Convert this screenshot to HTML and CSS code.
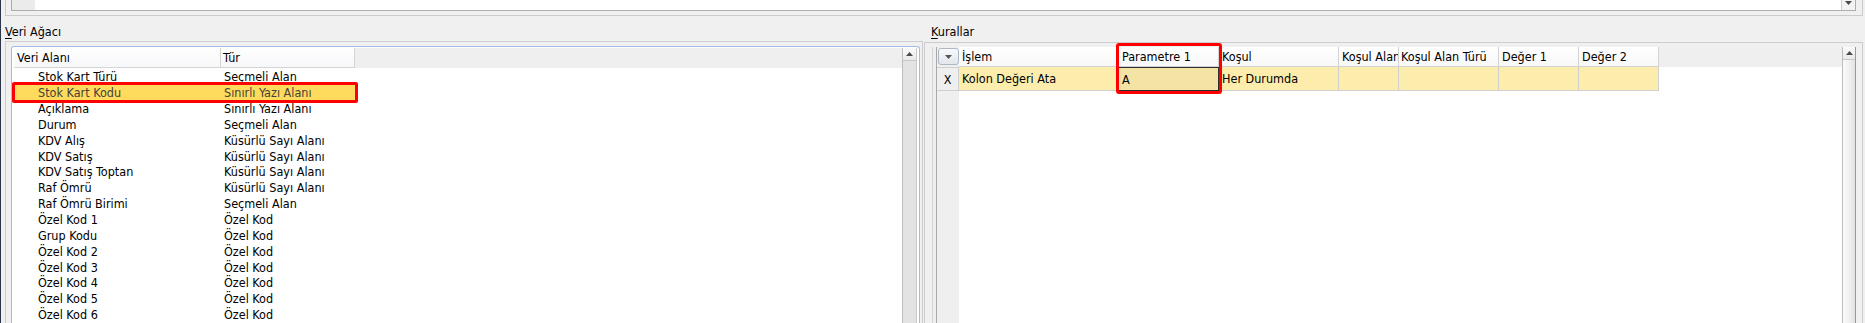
FILE: index.html
```html
<!DOCTYPE html>
<html lang="tr">
<head>
<meta charset="utf-8">
<title>Kurallar</title>
<link rel="stylesheet" href="styles.css">
</head>
<body>
<div class="app">
  <div class="top">
    <div class="combo">
      <div class="combo-left"></div>
      <div class="combo-field"></div>
      <div class="combo-btn"><svg width="7" height="4" viewBox="0 0 7 4"><path d="M0 0h7L3.5 4z" fill="#4a4a4a"/></svg></div>
    </div>
  </div>
  <div class="main">
    <section class="lg">
      <div class="caption"><span class="mn">V</span>eri Ağacı</div>
      <div class="lframe">
        <div class="listbox">
          <div class="list">
            <div class="list-head">
              <div class="hcell c1">Veri Alanı</div>
              <div class="hcell c2">Tür</div>
            </div>
            <div class="row"><div class="c1">Stok Kart Türü</div><div class="c2">Seçmeli Alan</div></div>
            <div class="row sel"><div class="c1">Stok Kart Kodu</div><div class="c2">Sınırlı Yazı Alanı</div></div>
            <div class="row"><div class="c1">Açıklama</div><div class="c2">Sınırlı Yazı Alanı</div></div>
            <div class="row"><div class="c1">Durum</div><div class="c2">Seçmeli Alan</div></div>
            <div class="row"><div class="c1">KDV Alış</div><div class="c2">Küsürlü Sayı Alanı</div></div>
            <div class="row"><div class="c1">KDV Satış</div><div class="c2">Küsürlü Sayı Alanı</div></div>
            <div class="row"><div class="c1">KDV Satış Toptan</div><div class="c2">Küsürlü Sayı Alanı</div></div>
            <div class="row"><div class="c1">Raf Ömrü</div><div class="c2">Küsürlü Sayı Alanı</div></div>
            <div class="row"><div class="c1">Raf Ömrü Birimi</div><div class="c2">Seçmeli Alan</div></div>
            <div class="row"><div class="c1">Özel Kod 1</div><div class="c2">Özel Kod</div></div>
            <div class="row"><div class="c1">Grup Kodu</div><div class="c2">Özel Kod</div></div>
            <div class="row"><div class="c1">Özel Kod 2</div><div class="c2">Özel Kod</div></div>
            <div class="row"><div class="c1">Özel Kod 3</div><div class="c2">Özel Kod</div></div>
            <div class="row"><div class="c1">Özel Kod 4</div><div class="c2">Özel Kod</div></div>
            <div class="row"><div class="c1">Özel Kod 5</div><div class="c2">Özel Kod</div></div>
            <div class="row"><div class="c1">Özel Kod 6</div><div class="c2">Özel Kod</div></div>
          </div>
          <div class="vscroll">
            <div class="sbtn"><svg width="7" height="4" viewBox="0 0 7 4"><path d="M0 4h7L3.5 0z" fill="#4a4a4a"/></svg></div>
            <div class="track"></div>
          </div>
        </div>
      </div>
    </section>
    <section class="rg">
      <div class="caption cap-r"><span class="mn">K</span>urallar</div>
      <div class="rframe">
        <div class="grid">
          <div class="gcol ind">
            <div class="gh"><div class="hbtn"><svg width="7" height="4" viewBox="0 0 7 4"><path d="M0 0h7L3.5 4z" fill="#555"/></svg></div></div>
            <div class="gd">X</div>
          </div>
          <div class="gcol w-islem"><div class="gh">İşlem</div><div class="gd">Kolon Değeri Ata</div></div>
          <div class="gcol w-param"><div class="mark"><div class="gh">Parametre 1</div><div class="gd cur">A</div></div></div>
          <div class="gcol w-kosul"><div class="gh">Koşul</div><div class="gd">Her Durumda</div></div>
          <div class="gcol w-kalan"><div class="gh">Koşul Alanı</div><div class="gd"></div></div>
          <div class="gcol w-ktur"><div class="gh">Koşul Alan Türü</div><div class="gd"></div></div>
          <div class="gcol w-deger"><div class="gh">Değer 1</div><div class="gd"></div></div>
          <div class="gcol w-deger"><div class="gh">Değer 2</div><div class="gd"></div></div>
          <div class="gfill"></div>
          <div class="rscroll">
            <div class="sbtn"><svg width="7" height="4" viewBox="0 0 7 4"><path d="M0 4h7L3.5 0z" fill="#4a4a4a"/></svg></div>
            <div class="rtrack"></div>
          </div>
        </div>
      </div>
    </section>
  </div>
</div>
</body>
</html>
```

FILE: styles.css
```css
* { box-sizing: border-box; }

body {
  margin: 0;
  width: 1865px;
  height: 323px;
  overflow: hidden;
  background: #f0f0f0;
  font-family: "DejaVu Sans Condensed", "DejaVu Sans", sans-serif;
  font-stretch: condensed;
  font-size: 12.5px;
  color: #000;
}

.app {
  display: flex;
  flex-direction: column;
  height: 323px;
  border-left: 1px solid #2b3548;
}

/* top combo */
.top {
  height: 16px;
  margin: 0 2px 0 4px;
  border: 1px solid #cbcbcb;
  border-top: none;
  padding: 0 6px 0 5px;
}
.combo {
  display: flex;
  height: 11px;
  border: 1px solid #adadad;
  border-top: none;
  background: #fff;
}
.combo-left { width: 23px; background: #ebebeb; }
.combo-field { flex: 1; }
.combo-btn {
  width: 14px;
  border-left: 1px solid #cfcfcf;
  background: #f3f3f3;
  display: flex;
  justify-content: center;
  align-items: center;
  padding-bottom: 4px;
}

.main { flex: 1; display: flex; min-height: 0; }

.caption {
  height: 26px;
  padding-top: 9px;
  line-height: 14px;
  white-space: nowrap;
}
.cap-r { padding-left: 7px; }
.mn { text-decoration: underline; text-underline-offset: 2px; }

/* left group */
.lg {
  width: 918px;
  margin-left: 4px;
  display: flex;
  flex-direction: column;
}
.lframe {
  flex: 1;
  border: 1px solid #cdcdcd;
  border-bottom: none;
  padding: 4px 2px 0 5px;
}
.listbox {
  height: 100%;
  display: flex;
  border: 1px solid #9dbde6;
  border-bottom: none;
  border-radius: 3px 3px 0 0;
  background: #fff;
  padding: 1px 1px 0 2px;
}
.list { flex: 1; }
.list-head {
  display: flex;
  height: 20px;
  background: #efefef;
  margin-bottom: 1px;
}
.hcell {
  background: linear-gradient(#ffffff, #f6f7f9);
  border-right: 1px solid #d5d5d5;
  border-bottom: 1px solid #d5d5d5;
  line-height: 19px;
  padding-left: 3px;
  white-space: nowrap;
}
.list-head .c1 { width: 207px; }
.list-head .c2 { width: 134px; padding-left: 2px; }

.row {
  display: flex;
  width: 341px;
  height: 15.87px;
  line-height: 15.87px;
  white-space: nowrap;
}
.row .c1 { width: 207px; padding-left: 24px; }
.row .c2 { width: 134px; padding-left: 3px; }
.row.sel {
  position: relative;
  background: #fedb5c;
  color: #45403a;
}
.row.sel::after {
  content: "";
  position: absolute;
  top: -3px;
  bottom: -2px;
  left: -2px;
  right: -3px;
  border: 3px solid #ff0000;
  border-radius: 2px;
}

.vscroll {
  width: 15px;
  margin-right: 1px;
  border-left: 1px solid #bdbdbd;
  border-right: 1px solid #c8c8c8;
  display: flex;
  flex-direction: column;
}
.sbtn {
  height: 13px;
  flex: none;
  background: linear-gradient(#fbfbfb, #e9e9e9);
  border-bottom: 1px solid #c6c6c6;
  display: flex;
  justify-content: center;
  align-items: center;
}
.track { flex: 1; background: #e3e3e3; }

/* right group */
.rg {
  flex: 1;
  margin: 0 2px 0 1px;
  display: flex;
  flex-direction: column;
}
.rframe {
  flex: 1;
  display: flex;
  border: 1px solid #cdcdcd;
  border-bottom: none;
  padding: 4px 5px 0 7px;
}
.grid {
  flex: 1;
  display: flex;
  border-left: 1px solid #d6d6d6;
  padding: 0 1px 0 3px;
  background: #efefef;
}
.gcol {
  display: flex;
  flex-direction: column;
  background: #fff;
}
.gh {
  height: 20px;
  flex: none;
  line-height: 19px;
  padding-left: 3px;
  background: linear-gradient(#ffffff, #f8f8f8);
  border-right: 1px solid #d3d3d3;
  border-bottom: 1px solid #d3d3d3;
  white-space: nowrap;
  overflow: hidden;
}
.gd {
  height: 24px;
  flex: none;
  line-height: 23px;
  padding-left: 3px;
  background: #fdedac;
  border-right: 1px solid #cfcfcf;
  border-bottom: 1px solid #cfcfcf;
  white-space: nowrap;
  overflow: hidden;
}
.gcol.ind {
  width: 23px;
  background: #efefef;
  border-left: 1px solid #a9a9a9;
}
.ind .gh {
  background: #efefef;
  border-bottom: none;
  border-right: none;
  padding: 1px 0 2px 1px;
}
.hbtn {
  width: 21px;
  height: 17px;
  border: 1px solid #aeb8c5;
  border-radius: 3px;
  background: linear-gradient(#f7f9fb, #e2e6ec);
  display: flex;
  justify-content: center;
  align-items: center;
}
.ind .gd {
  background: #efefef;
  text-align: center;
  padding-left: 0;
  border-top: 1px solid #cfcfcf;
  border-right: 1px solid #cfcfcf;
  height: 24px;
}
.w-islem { width: 159px; }
.w-param { width: 101px; }
.w-kosul { width: 120px; }
.w-kalan { width: 60px; }
.w-ktur { width: 100px; }
.w-ktur .gh, .w-ktur .gd { padding-left: 2px; }
.w-deger { width: 80px; }
.mark {
  position: relative;
  display: flex;
  flex-direction: column;
}
.mark .gh { padding-left: 4px; }
.mark::after {
  content: "";
  position: absolute;
  top: -4px;
  bottom: -3px;
  left: -2px;
  right: -3px;
  border: 3px solid #ff0000;
  border-radius: 3px;
  pointer-events: none;
}
.gd.cur {
  background: #f3e3a5;
  border: 1px solid #2e2e2e;
  padding-left: 3px;
}
.gfill {
  flex: 1;
  background: #fff;
  border-top: 20px solid #efefef;
}
.rscroll {
  width: 14px;
  display: flex;
  flex-direction: column;
  border-left: 1px solid #bdbdbd;
  border-right: 1px solid #9a9a9a;
}
.rtrack {
  flex: 1;
  background: linear-gradient(90deg, #fbfbfb, #eeeeee 60%, #e2e2e2);
}
```
